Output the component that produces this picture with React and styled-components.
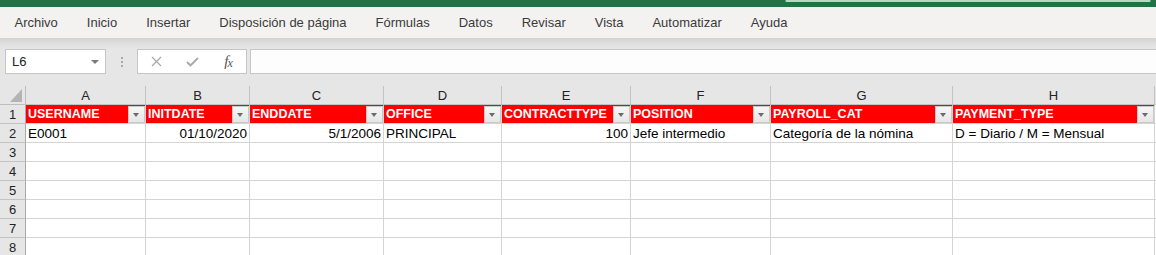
import styled, { createGlobalStyle } from 'styled-components';

const GlobalStyle = createGlobalStyle`
  html, body {
    margin: 0;
    padding: 0;
    background: #e6e6e6;
    overflow: hidden;
  }
  body {
    font-family: 'Liberation Sans', Arial, sans-serif;
  }
`;

const tabs = [
  'Archivo',
  'Inicio',
  'Insertar',
  'Disposición de página',
  'Fórmulas',
  'Datos',
  'Revisar',
  'Vista',
  'Automatizar',
  'Ayuda',
];

const columns = [
  { letter: 'A', width: 120, head: 'USERNAME', value: 'E0001' },
  { letter: 'B', width: 104, head: 'INITDATE', value: '01/10/2020', right: true },
  { letter: 'C', width: 134, head: 'ENDDATE', value: '5/1/2006', right: true },
  { letter: 'D', width: 118, head: 'OFFICE', value: 'PRINCIPAL' },
  { letter: 'E', width: 129, head: 'CONTRACTTYPE', value: '100', right: true },
  { letter: 'F', width: 140, head: 'POSITION', value: 'Jefe intermedio' },
  { letter: 'G', width: 182, head: 'PAYROLL_CAT', value: 'Categoría de la nómina' },
  { letter: 'H', width: 202, head: 'PAYMENT_TYPE', value: 'D = Diario / M = Mensual' },
  // only the left gridline of column I shows in the window
  { letter: '', width: 100 },
];

const emptyRows = [3, 4, 5, 6, 7, 8];

const App = () => {
  const template = ['26px', ...columns.map((c) => `${c.width}px`)].join(' ');

  return (
    <>
      <GlobalStyle />
      <TitleBar>
        <SearchStub />
      </TitleBar>
      <TabBar>
        {tabs.map((t) => (
          <Tab key={t}>{t}</Tab>
        ))}
      </TabBar>
      <FormulaArea>
        <NameBox>
          L6
          <NameArrow />
        </NameBox>
        <Grip>
          <span />
          <span />
          <span />
        </Grip>
        <FxBox>
          <FxSlot>
            <svg width="11" height="11" viewBox="0 0 11 11">
              <path d="M1 1 L10 10 M10 1 L1 10" stroke="#a8a8a8" strokeWidth="1.2" fill="none" />
            </svg>
          </FxSlot>
          <FxSlot>
            <svg width="13" height="10" viewBox="0 0 13 10">
              <path d="M1 5 L4.5 8.5 L12 1" stroke="#a8a8a8" strokeWidth="1.8" fill="none" />
            </svg>
          </FxSlot>
          <FxSlot>
            <FxText>
              f<sub>x</sub>
            </FxText>
          </FxSlot>
        </FxBox>
        <FormulaInput />
      </FormulaArea>
      <SheetWrap>
        <Sheet $cols={template}>
          <Corner>
            <CornerTriangle />
          </Corner>
          {columns.map((c, i) => (
            <ColHeader key={i}>{c.letter}</ColHeader>
          ))}

          <RowHeader>1</RowHeader>
          {columns.map((c, i) =>
            c.head ? (
              <HeadCell key={i}>
                <HeadText>{c.head}</HeadText>
                <FilterButton />
              </HeadCell>
            ) : (
              <Cell key={i} />
            )
          )}

          <RowHeader>2</RowHeader>
          {columns.map((c, i) => (
            <Cell key={i} $right={c.right}>
              {c.value}
            </Cell>
          ))}

          {emptyRows.map((r) => (
            <Row key={r} n={r} />
          ))}
        </Sheet>
      </SheetWrap>
    </>
  );
};

const Row = ({ n }) => (
  <>
    <RowHeader>{n}</RowHeader>
    {columns.map((c, i) => (
      <Cell key={i} />
    ))}
  </>
);

const TitleBar = styled.div`
  height: 7px;
  background: #217346;
  display: flex;
  justify-content: flex-end;
  padding-right: 5px;
`;

const SearchStub = styled.div`
  width: 364px;
  height: 2px;
  background: #b9d8c2;
  border-left: 1px solid #5f9b72;
  border-right: 1px solid #5f9b72;
`;

const TabBar = styled.div`
  height: 31px;
  background: #f3f2f1;
  display: flex;
  align-items: center;
`;

const Tab = styled.div`
  padding: 0 14.5px 1px;
  font-size: 13px;
  color: #3b3a39;
  white-space: nowrap;
`;

const FormulaArea = styled.div`
  display: flex;
  align-items: center;
  padding: 11px 0 12px 5px;
  background: linear-gradient(to bottom, #d2d2d2 0px, #dedede 5px, #e6e6e6 10px);
`;

const NameBox = styled.div`
  position: relative;
  box-sizing: border-box;
  width: 101px;
  height: 25px;
  border: 1px solid #c6c6c6;
  background: #fff;
  display: flex;
  align-items: center;
  padding-left: 6px;
  font-size: 13px;
  color: #222;
`;

const NameArrow = styled.div`
  position: absolute;
  right: 6px;
  top: 10px;
  border-left: 4px solid transparent;
  border-right: 4px solid transparent;
  border-top: 4px solid #7a7a7a;
`;

const Grip = styled.div`
  display: flex;
  flex-direction: column;
  gap: 2px;
  margin: 0 14px 0 15px;
  span {
    width: 2px;
    height: 2px;
    background: #a9a9a9;
  }
`;

const FxBox = styled.div`
  box-sizing: border-box;
  width: 110px;
  height: 25px;
  border: 1px solid #c6c6c6;
  background: #fff;
  display: flex;
  align-items: center;
`;

const FxSlot = styled.div`
  width: 36px;
  display: flex;
  justify-content: center;
  align-items: center;
`;

const FxText = styled.span`
  font-family: 'Liberation Serif', 'Times New Roman', serif;
  font-style: italic;
  font-size: 15px;
  color: #555;
  letter-spacing: -1px;
  sub {
    font-size: 12px;
    vertical-align: -1px;
  }
`;

const FormulaInput = styled.div`
  flex: 1;
  box-sizing: border-box;
  height: 25px;
  margin-left: 3px;
  border: 1px solid #c6c6c6;
  border-right: none;
  background: #fdfdfd;
`;

const SheetWrap = styled.div`
  overflow: hidden;
  width: 100%;
  height: 169px;
`;

const Sheet = styled.div`
  display: grid;
  grid-template-columns: ${(p) => p.$cols};
  grid-auto-rows: 19px;
  width: max-content;
  background: #fff;
`;

const Corner = styled.div`
  position: relative;
  box-sizing: border-box;
  background: #e6e6e6;
  border-right: 1px solid #bdbdbd;
  border-bottom: 1px solid #bdbdbd;
`;

const CornerTriangle = styled.div`
  position: absolute;
  right: 3px;
  bottom: 2px;
  width: 12px;
  height: 13px;
  background: #b4b4b4;
  clip-path: polygon(100% 0, 100% 100%, 0 100%);
`;

const ColHeader = styled.div`
  box-sizing: border-box;
  background: #e6e6e6;
  border-right: 1px solid #c3c3c3;
  border-bottom: 1px solid #c3c3c3;
  display: flex;
  align-items: center;
  justify-content: center;
  font-size: 13px;
  color: #222;
`;

const RowHeader = styled.div`
  box-sizing: border-box;
  background: #e6e6e6;
  border-right: 1px solid #a9a9a9;
  border-bottom: 1px solid #c3c3c3;
  display: flex;
  align-items: center;
  justify-content: center;
  font-size: 13px;
  color: #222;
`;

const Cell = styled.div`
  box-sizing: border-box;
  border-right: 1px solid #d4d4d4;
  border-bottom: 1px solid #d4d4d4;
  display: flex;
  align-items: center;
  justify-content: ${(p) => (p.$right ? 'flex-end' : 'flex-start')};
  padding: 0 2px;
  font-size: 13.5px;
  color: #000;
  white-space: nowrap;
  overflow: hidden;
`;

const HeadCell = styled.div`
  box-sizing: border-box;
  background: #ff0000;
  border-right: 1px solid #d4d4d4;
  border-bottom: 1px solid #d4d4d4;
  display: flex;
  align-items: center;
  justify-content: space-between;
  padding-left: 2px;
  overflow: hidden;
`;

const HeadText = styled.span`
  color: #fff;
  font-weight: bold;
  font-size: 12.5px;
  white-space: nowrap;
`;

const FilterButton = styled.div`
  position: relative;
  flex: none;
  box-sizing: border-box;
  width: 17px;
  height: 17px;
  background: linear-gradient(to bottom, #f6f6f6, #e6e6e6);
  border: 1px solid #c9c9c9;
  &::after {
    content: '';
    position: absolute;
    left: 4px;
    top: 6px;
    border-left: 3.5px solid transparent;
    border-right: 3.5px solid transparent;
    border-top: 4px solid #6b6b6b;
  }
`;

export default App;
